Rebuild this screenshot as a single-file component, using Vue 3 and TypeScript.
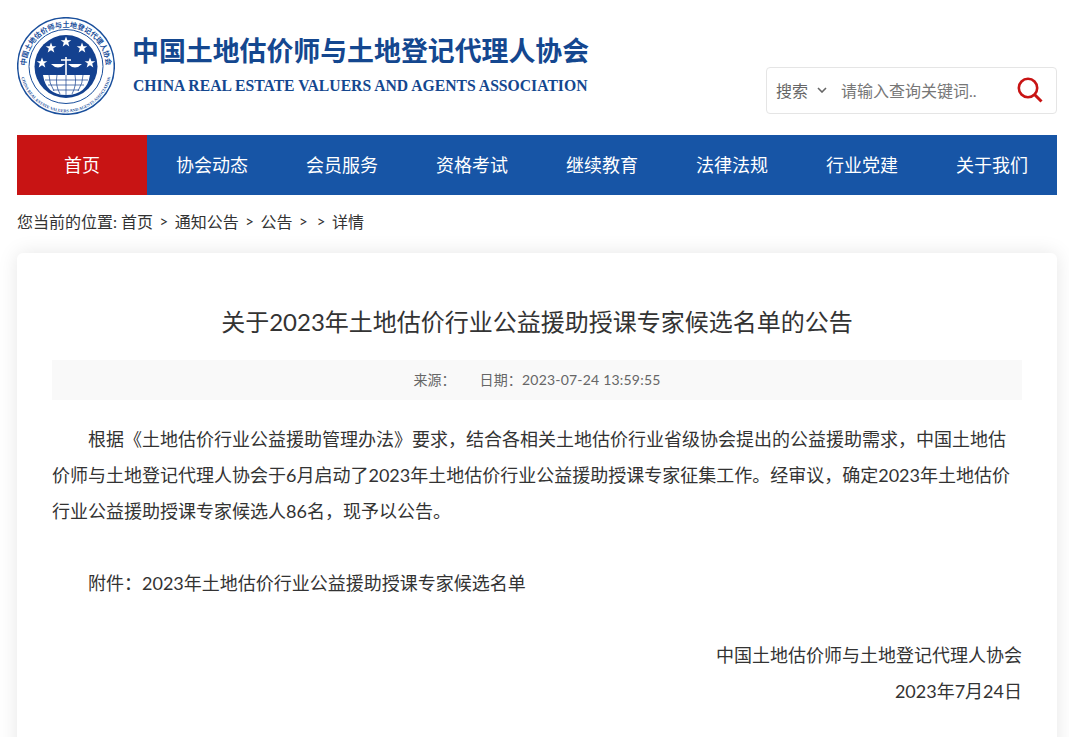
<script setup lang="ts">
const navItems = ['首页', '协会动态', '会员服务', '资格考试', '继续教育', '法律法规', '行业党建', '关于我们']
const stars = [
  [66, 42],
  [51, 48],
  [82, 48],
  [42, 63],
  [90, 63],
]
const starPoints = '0,-5.5 1.4,-1.8 5.3,-1.8 2.2,0.6 3.3,4.4 0,2.2 -3.3,4.4 -2.2,0.6 -5.3,-1.8 -1.4,-1.8'
</script>

<template>
  <div class="page">
    <header class="top">
      <div class="brand">
        <svg class="logo" viewBox="17 17 98 98" width="98" height="98">
          <defs>
            <path id="arc-top" d="M 26.1 70 A 40 40 0 1 1 105.9 70" />
            <path id="arc-bottom" d="M 20.5 73 A 46 46 0 0 0 111.5 73" />
          </defs>
          <circle cx="66" cy="66" r="48.3" fill="#fff" stroke="#1a4f9c" stroke-width="1.5" />
          <circle cx="66" cy="66.5" r="37" fill="#fff" stroke="#1a4f9c" stroke-width="1" />
          <circle cx="66" cy="66.5" r="31.5" fill="#14418f" />
          <text class="logo-cn"><textPath href="#arc-top" startOffset="50%" text-anchor="middle">中国土地估价师与土地登记代理人协会</textPath></text>
          <text class="logo-en"><textPath href="#arc-bottom" startOffset="50%" text-anchor="middle">CHINA REAL ESTATE VALUERS AND AGENTS ASSOCIATION</textPath></text>
          <polygon
            v-for="(s, i) in stars"
            :key="i"
            :points="starPoints"
            :transform="`translate(${s[0]} ${s[1]})`"
            fill="#fff"
          />
          <path d="M51 64Q58 71 65 64ZM68 64Q75 71 82 64Z" fill="#fff" />
          <path d="M66 57V75M61 60H71" fill="none" stroke="#fff" stroke-width="1.6" />
          <path d="M43 75H90Q87 95 66 95Q46 95 43 75Z" fill="#fff" />
          <path d="M45 80H88M48 85H84M53 90H79M66 75V95M57 75Q55 85 60 94M75 75Q77 85 72 94M49 75Q49 83 54 91M83 75Q83 83 78 91" fill="none" stroke="#14418f" stroke-width="0.7" />
        </svg>
        <div class="brand-text">
          <div class="brand-cn">中国土地估价师与土地登记代理人协会</div>
          <div class="brand-en">CHINA REAL ESTATE VALUERS AND AGENTS ASSOCIATION</div>
        </div>
      </div>
      <div class="search">
        <span class="search-type">搜索</span>
        <svg class="chevron" viewBox="0 0 10 6" width="10" height="6">
          <path d="M1 1l4 4 4-4" fill="none" stroke="#666" stroke-width="1.6" />
        </svg>
        <span class="search-input">请输入查询关键词..</span>
        <svg class="search-icon" viewBox="0 0 26 26" width="26" height="26">
          <circle cx="11" cy="11" r="9.2" fill="none" stroke="#c81414" stroke-width="2.6" />
          <path d="M17.5 17.5L24.5 24.5" stroke="#c81414" stroke-width="3" />
        </svg>
      </div>
    </header>

    <nav class="nav">
      <a v-for="(item, i) in navItems" :key="item" class="nav-item" :class="{ active: i === 0 }">{{ item }}</a>
    </nav>

    <div class="crumbs">
      您当前的位置:
      <span class="crumb">首页</span><span class="sep">&gt;</span>
      <span>通知公告</span><span class="sep">&gt;</span>
      <span>公告</span><span class="sep">&gt;</span><span class="sep">&gt;</span>
      <span>详情</span>
    </div>

    <main class="card">
      <h1 class="title">关于2023年土地估价行业公益援助授课专家候选名单的公告</h1>
      <div class="meta">
        <span>来源：</span>
        <span class="meta-date">日期：2023-07-24 13:59:55</span>
      </div>
      <article class="content">
        <p class="indent">根据《土地估价行业公益援助管理办法》要求，结合各相关土地估价行业省级协会提出的公益援助需求，中国土地估价师与土地登记代理人协会于6月启动了2023年土地估价行业公益援助授课专家征集工作。经审议，确定2023年土地估价行业公益援助授课专家候选人86名，现予以公告。</p>
        <p class="blank"></p>
        <p class="indent">附件：2023年土地估价行业公益援助授课专家候选名单</p>
        <p class="blank"></p>
        <p class="right">中国土地估价师与土地登记代理人协会</p>
        <p class="right">2023年7月24日</p>
      </article>
    </main>
  </div>
</template>

<style>
html,
body {
  background: #fff;
  overflow: hidden;
}
</style>

<style scoped>
.page {
  width: 1040px;
  margin-left: 17px;
  font-family: Lato, "Noto Sans CJK SC", "Noto Sans", sans-serif;
  color: #333;
}

.top {
  height: 135px;
  display: flex;
  justify-content: space-between;
}

.brand {
  display: flex;
  align-items: flex-start;
  padding-top: 17px;
}

.brand-text {
  margin-left: 17px;
  padding-top: 17px;
  color: #14478f;
}

.brand-cn {
  font-size: 26.9px;
  line-height: 36px;
  font-weight: 700;
  font-family: "Liberation Serif", "Noto Sans CJK SC", serif;
  white-space: nowrap;
}

.brand-en {
  margin-top: 6px;
  margin-left: 1px;
  font-size: 15.7px;
  line-height: 20px;
  font-weight: 700;
  font-family: "Liberation Serif", serif;
  white-space: nowrap;
}

.logo-cn {
  font-size: 7.2px;
  font-weight: 700;
  fill: #1a4f9c;
  font-family: "Noto Sans CJK SC", sans-serif;
}

.logo-en {
  font-size: 4.2px;
  font-weight: 700;
  fill: #1a4f9c;
  font-family: "Liberation Serif", serif;
}

.search {
  align-self: flex-start;
  margin-top: 67px;
  width: 291px;
  height: 47px;
  box-sizing: border-box;
  border: 1px solid #e5e5e5;
  border-radius: 4px;
  display: flex;
  align-items: center;
  padding: 0 13px 2px 9px;
  font-size: 16px;
  color: #666;
}

.chevron {
  margin-left: 9px;
}

.search-input {
  margin-left: 14px;
  color: #777;
  flex: 1;
}

.nav {
  height: 60px;
  display: flex;
  background: #1755a6;
}

.nav-item {
  width: 130px;
  height: 60px;
  text-align: center;
  line-height: 60px;
  font-size: 18px;
  color: #fff;
}

.nav-item.active {
  background: #c81414;
}

.crumbs {
  height: 58px;
  display: flex;
  align-items: center;
  font-size: 16px;
  color: #333;
  gap: 4px;
  padding-bottom: 7px;
  box-sizing: border-box;
}

.sep {
  font-size: 15px;
  margin: 0 2.5px;
}

.card {
  background: #fff;
  border-radius: 6px;
  box-shadow: 0 0 20px rgba(0, 0, 0, 0.1);
  padding: 51px 35px 60px;
}

.title {
  margin: 0;
  font-size: 24px;
  line-height: 36px;
  font-weight: 400;
  text-align: center;
}

.meta {
  margin-top: 20px;
  height: 40px;
  padding-bottom: 2px;
  box-sizing: border-box;
  background: #f9f9f9;
  display: flex;
  justify-content: center;
  align-items: center;
  gap: 24px;
  font-size: 14px;
  color: #666;
}

.meta-date {
  letter-spacing: 0.2px;
}

.content {
  margin-top: 21px;
  font-size: 18px;
  line-height: 36px;
}

.content p {
  margin: 0;
}

.indent {
  text-indent: 2em;
}

.blank {
  height: 36px;
}

.right {
  text-align: right;
}
</style>
